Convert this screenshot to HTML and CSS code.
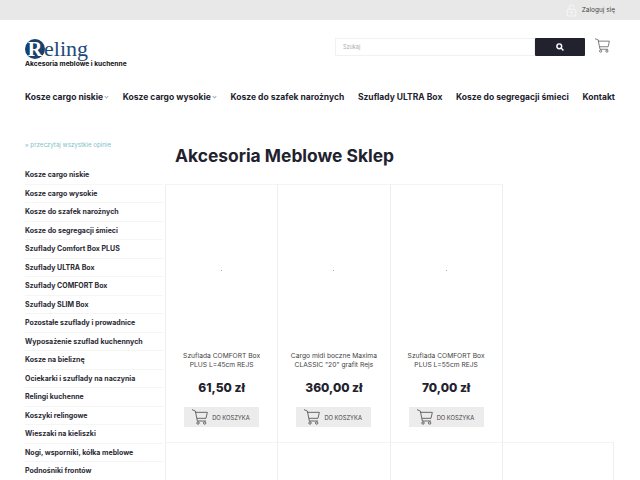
FILE: index.html
```html
<!DOCTYPE html>
<html lang="pl">
<head>
	<meta charset="utf-8">
	<title>Akcesoria Meblowe Sklep</title>
	<link rel="stylesheet" href="styles.css">
</head>
<body>

	<div class="topbar">
		<svg class="lock" width="11" height="13" viewBox="0 0 14 16" fill="none" stroke="#f6f6f6" stroke-width="1.300">
			<rect x="1.500" y="6.500" width="11" height="8.500" rx="1.500"/>
			<path d="M4 6.500V4a3 3 0 0 1 6 0"/>
			<circle cx="7" cy="10.500" r="1"/>
		</svg>
		<a class="login">Zaloguj się</a>
	</div>

	<header class="head">
		<div class="logo">
			<div class="logo-name"><span class="logo-r">R</span>eling</div>
			<div class="logo-sub">Akcesoria meblowe i kuchenne</div>
		</div>
		<div class="search">
			<div class="search-input">Szukaj</div>
			<div class="search-btn">
				<svg width="8" height="8" viewBox="0 0 11 11" fill="none" stroke="#fff" stroke-width="2">
					<circle cx="4.500" cy="4.500" r="3.300"/>
					<path d="M7 7l3.200 3.200"/>
				</svg>
			</div>
			<svg class="cart-top" width="15" height="15" viewBox="0 0 24 24" fill="none" stroke="#555" stroke-width="1.200">
				<path d="M0 1l5 2 3 15h13"/>
				<path d="M5 5h18l-2 9H7.500"/>
				<circle cx="9" cy="21" r="1.800"/>
				<circle cx="19" cy="21" r="1.800"/>
			</svg>
		</div>
	</header>

	<nav class="nav">
		<a>Kosze cargo niskie <i class="chev"></i></a>
		<a>Kosze cargo wysokie <i class="chev"></i></a>
		<a>Kosze do szafek narożnych</a>
		<a>Szuflady ULTRA Box</a>
		<a>Kosze do segregacji śmieci</a>
		<a>Kontakt</a>
	</nav>

	<div class="page">
		<aside class="side">
			<a class="reviews">» przeczytaj wszystkie opinie</a>
			<ul class="cats">
				<li>Kosze cargo niskie</li>
				<li>Kosze cargo wysokie</li>
				<li>Kosze do szafek narożnych</li>
				<li>Kosze do segregacji śmieci</li>
				<li>Szuflady Comfort Box PLUS</li>
				<li>Szuflady ULTRA Box</li>
				<li>Szuflady COMFORT Box</li>
				<li>Szuflady SLIM Box</li>
				<li>Pozostałe szuflady i prowadnice</li>
				<li>Wyposażenie szuflad kuchennych</li>
				<li>Kosze na bieliznę</li>
				<li>Ociekarki i szuflady na naczynia</li>
				<li>Relingi kuchenne</li>
				<li>Koszyki relingowe</li>
				<li>Wieszaki na kieliszki</li>
				<li>Nogi, wsporniki, kółka meblowe</li>
				<li>Podnośniki frontów</li>
			</ul>
		</aside>

		<main class="main">
			<h1>Akcesoria Meblowe Sklep</h1>
			<div class="grid">
				<div class="card">
					<div class="thumb"><span class="dot"></span></div>
					<div class="name">Szuflada COMFORT Box PLUS L=45cm REJS</div>
					<div class="price">61,50 zł</div>
					<a class="buy">
						<svg width="16" height="16" viewBox="0 0 24 24" fill="none" stroke="#555" stroke-width="1.300"><path d="M0 1l5 2 3 15h13"/><path d="M5 5h18l-2 9H7.500"/><circle cx="9" cy="21" r="1.800"/><circle cx="19" cy="21" r="1.800"/></svg>
						DO KOSZYKA
					</a>
				</div>
				<div class="card">
					<div class="thumb"><span class="dot"></span></div>
					<div class="name">Cargo midi boczne Maxima CLASSIC "20" grafit Rejs</div>
					<div class="price">360,00 zł</div>
					<a class="buy">
						<svg width="16" height="16" viewBox="0 0 24 24" fill="none" stroke="#555" stroke-width="1.300"><path d="M0 1l5 2 3 15h13"/><path d="M5 5h18l-2 9H7.500"/><circle cx="9" cy="21" r="1.800"/><circle cx="19" cy="21" r="1.800"/></svg>
						DO KOSZYKA
					</a>
				</div>
				<div class="card">
					<div class="thumb"><span class="dot"></span></div>
					<div class="name">Szuflada COMFORT Box PLUS L=55cm REJS</div>
					<div class="price">70,00 zł</div>
					<a class="buy">
						<svg width="16" height="16" viewBox="0 0 24 24" fill="none" stroke="#555" stroke-width="1.300"><path d="M0 1l5 2 3 15h13"/><path d="M5 5h18l-2 9H7.500"/><circle cx="9" cy="21" r="1.800"/><circle cx="19" cy="21" r="1.800"/></svg>
						DO KOSZYKA
					</a>
				</div>
				<div class="blank"></div>
				<div class="card short"></div>
				<div class="card short"></div>
				<div class="card short"></div>
				<div class="card short last"></div>
			</div>
		</main>
	</div>

</body>
</html>
```

FILE: styles.css
```css
* {
    box-sizing: border-box;
}

html, body {
    margin: 0;
    height: 480px;
    overflow: hidden;
}

body {
    font-family: Inter, "Noto Sans", sans-serif;
    color: #22222e;
    background: #fff;
}

.topbar {
    height: 20px;
    background: #e8e8e8;
    display: flex;
    justify-content: flex-end;
    align-items: center;
    gap: 5px;
    padding-right: 25px;
}

.login {
    font-size: 6.500px;
    color: #444;
}

.head {
    height: 52px;
    padding: 0 25px;
    display: flex;
    justify-content: space-between;
}

.logo {
    padding-top: 18px;
}

.logo-name {
    font-family: "Liberation Serif", serif;
    font-size: 22px;
    line-height: 21px;
    height: 21px;
    color: #1d4a7a;
    display: flex;
    align-items: center;
}

.logo-r {
    width: 20px;
    height: 20px;
    border-radius: 50%;
    background: #17406f;
    color: #fff;
    font-size: 20px;
    line-height: 20px;
    font-weight: bold;
    text-align: center;
    margin-right: -1px;
}

.logo-sub {
    font-size: 6.700px;
    line-height: 10px;
    font-weight: 700;
    color: #111;
    white-space: nowrap;
}

.search {
    display: flex;
    padding: 18px 5px 0 0;
    height: 36px;
}

.search-input {
    width: 200px;
    height: 18px;
    border: 1px solid #f1f1f1;
    font-size: 5.500px;
    line-height: 16px;
    padding-left: 7px;
    color: #aaa;
}

.search-btn {
    width: 50px;
    height: 18px;
    background: #22222e;
    border-radius: 1px;
    display: flex;
    justify-content: center;
    align-items: center;
}

.cart-top {
    margin-left: 10px;
}

.nav {
    height: 52px;
    padding: 20px 25px 0;
    display: flex;
    justify-content: space-between;
    align-items: flex-start;
    font-size: 8.500px;
    font-weight: 700;
    white-space: nowrap;
}

.chev {
    display: inline-block;
    width: 3px;
    height: 3px;
    border-right: 1px solid #aaa;
    border-bottom: 1px solid #aaa;
    transform: rotate(45deg);
    margin: 0 1px 2px 0;
}

.page {
    display: flex;
    padding-left: 25px;
}

.side {
    width: 140px;
    padding-right: 2px;
    flex-shrink: 0;
}

.reviews {
    display: block;
    font-size: 6.200px;
    color: #7fbfc8;
    padding-top: 17px;
    height: 42px;
    white-space: nowrap;
}

.cats {
    list-style: none;
    margin: 0;
    padding: 0;
}

.cats li {
    height: 18.500px;
    line-height: 18px;
    font-size: 7px;
    font-weight: 700;
    color: #2a2a33;
    border-bottom: 1px solid #f5f5f5;
    white-space: nowrap;
}

.main {
    width: 450px;
}

h1 {
    margin: 0;
    height: 60px;
    padding: 21px 0 0 10px;
    font-size: 17.400px;
    line-height: 22px;
    font-weight: 700;
    white-space: nowrap;
}

.grid {
    display: grid;
    grid-template-columns: repeat(4, 112.250px);
}

.card {
    height: 258px;
    border-left: 1px solid #eee;
    border-top: 1px solid #f4f4f4;
    display: flex;
    flex-direction: column;
    align-items: center;
    padding: 0 8px;
}

.blank {
    border-left: 1px solid #eee;
}

.last {
    border-right: 1px solid #eee;
}

.thumb {
    height: 167px;
    padding-top: 85px;
}

.dot {
    display: block;
    width: 1px;
    height: 1px;
    background: #aaa;
}

.name {
    height: 29px;
    font-size: 6.700px;
    line-height: 9px;
    text-align: center;
    color: #444;
}

.price {
    font-size: 12px;
    font-weight: 800;
    line-height: 14px;
    height: 26px;
    white-space: nowrap;
}

.buy {
    width: 75px;
    height: 20px;
    background: #ececec;
    display: flex;
    align-items: center;
    gap: 4px;
    padding-left: 8px;
    font-size: 5.800px;
    color: #444;
    white-space: nowrap;
}
```
